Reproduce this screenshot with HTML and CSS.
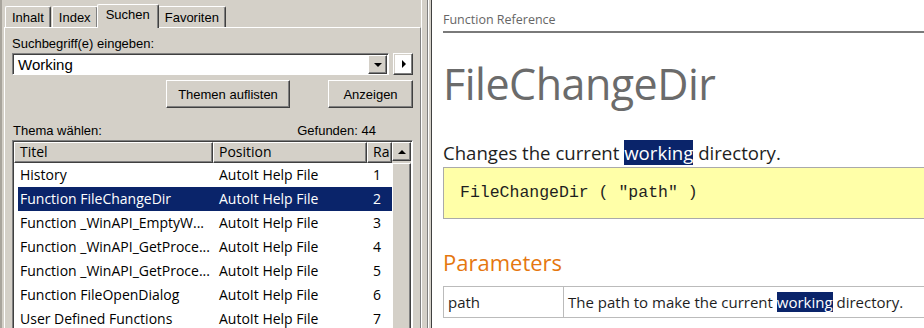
FILE: index.html
```html
<!DOCTYPE html>
<html lang="de">

<head>
    <meta charset="UTF-8">
    <meta name="viewport" content="width=device-width, initial-scale=1.0">
    <title>AutoIt Hilfe</title>
    <link rel="stylesheet" href="styles.css">
</head>

<body>
    <div class="window">
        <aside class="nav-pane">
            <div class="tabs">
                <div class="tab">Inhalt</div>
                <div class="tab">Index</div>
                <div class="tab active">Suchen</div>
                <div class="tab">Favoriten</div>
            </div>
            <div class="tab-panel">
                <label class="label">Suchbegriff(e) eingeben:</label>
                <div class="search-row">
                    <div class="combo">
                        <span class="combo-text">Working</span>
                        <span class="combo-btn"><span class="arrow-down"></span></span>
                    </div>
                    <div class="go-btn"><span class="arrow-right"></span></div>
                </div>
                <div class="button-row">
                    <div class="btn btn-list">Themen auflisten</div>
                    <div class="btn btn-show">Anzeigen</div>
                </div>
                <div class="result-info">
                    <span>Thema wählen:</span>
                    <span class="found">Gefunden: 44</span>
                </div>
                <div class="listview">
                    <div class="list-main">
                        <div class="list-head">
                            <div class="hcell c-title">Titel</div>
                            <div class="hcell c-pos">Position</div>
                            <div class="hcell c-rank">Ra</div>
                        </div>
                        <div id="rows"></div>
                    </div>
                    <div class="scrollbar">
                        <div class="sb-btn"><span class="arrow-up"></span></div>
                        <div class="sb-thumb"></div>
                    </div>
                </div>
            </div>
        </aside>
        <div class="splitter"></div>
        <main class="doc">
            <div class="doc-top">Function Reference</div>
            <h1 class="doc-title">FileChangeDir</h1>
            <p class="summary">Changes the current <span class="hit">working</span> directory.</p>
            <div class="syntax">FileChangeDir ( "path" )</div>
            <h2 class="section">Parameters</h2>
            <table class="params">
                <tr>
                    <td class="p-name">path</td>
                    <td>The path to make the current <span class="hit">working</span> directory.</td>
                </tr>
            </table>
        </main>
    </div>
    <script>
        const topics = [
            ["History", 1],
            ["Function FileChangeDir", 2],
            ["Function _WinAPI_EmptyW...", 3],
            ["Function _WinAPI_GetProce...", 4],
            ["Function _WinAPI_GetProce...", 5],
            ["Function FileOpenDialog", 6],
            ["User Defined Functions", 7]
        ];
        const selected = 1;

        const rowsEle = document.getElementById('rows');
        for (let i = 0; i < topics.length; i++) {
            const row = document.createElement('div');
            row.className = "row" + (i === selected ? " selected" : "");
            row.innerHTML = `<div class="cell c-title">${topics[i][0]}</div>` +
                `<div class="cell c-pos">AutoIt Help File</div>` +
                `<div class="cell c-rank">${topics[i][1]}</div>`;
            rowsEle.appendChild(row);
        }
    </script>
</body>

</html>
```

FILE: styles.css
```css
* {
    box-sizing: border-box;
}

body {
    margin: 0;
    width: 924px;
    height: 328px;
    overflow: hidden;
    font-family: "Liberation Sans", Arial, sans-serif;
    font-size: 13px;
    color: #000;
}

.window {
    display: flex;
    height: 328px;
}

/* left: help navigation */
.nav-pane {
    width: 421px;
    background-color: #d4d0c8;
    padding: 4px 0 0 2px;
    border-left: 2px solid #a8a49c;
    display: flex;
    flex-direction: column;
}

.tabs {
    display: flex;
    align-items: flex-end;
    height: 23px;
    padding-left: 1px;
}

.tab {
    height: 21px;
    padding: 3px 6px 0 6px;
    border-top: 1px solid #fff;
    border-left: 1px solid #fff;
    border-right: 1px solid #404040;
    box-shadow: inset -1px 0 0 #808080;
    border-radius: 2px 2px 0 0;
    margin-right: 1px;
    font-size: 13px;
}

.tab.active {
    height: 24px;
    padding-top: 2px;
    margin: 0 -1px 0 -2px;
    padding-left: 8px;
    padding-right: 8px;
    position: relative;
    top: 1px;
    background-color: #d4d0c8;
}

.tab-panel {
    flex: 1;
    border-top: 1px solid #fff;
    border-left: 1px solid #fff;
    border-right: 1px solid #808080;
    padding: 8px 7px 0 7px;
    display: flex;
    flex-direction: column;
}

.label {
    display: block;
    height: 16px;
    line-height: 15px;
}

.search-row {
    display: flex;
    margin-top: 1px;
    height: 22px;
}

.combo {
    width: 378px;
    background: #fff;
    border-top: 1px solid #808080;
    border-left: 1px solid #808080;
    border-right: 1px solid #fff;
    border-bottom: 1px solid #fff;
    box-shadow: inset 1px 1px 0 #404040;
    display: flex;
    align-items: center;
    justify-content: space-between;
    padding: 0 1px 0 5px;
}

.combo-text {
    font-size: 15px;
    padding-top: 1px;
}

.combo-btn {
    width: 19px;
    height: 19px;
    margin-top: 1px;
    background: #d4d0c8;
    border-top: 1px solid #fff;
    border-left: 1px solid #fff;
    border-right: 1px solid #404040;
    border-bottom: 1px solid #404040;
    box-shadow: inset -1px -1px 0 #808080;
    display: flex;
    align-items: center;
    justify-content: center;
}

.arrow-down {
    border-left: 4px solid transparent;
    border-right: 4px solid transparent;
    border-top: 4px solid #000;
    margin-top: 1px;
}

.go-btn {
    width: 20px;
    margin-left: 4px;
    background: #fff;
    border-top: 1px solid #fff;
    border-left: 1px solid #fff;
    border-right: 1px solid #404040;
    border-bottom: 1px solid #404040;
    box-shadow: inset -1px -1px 0 #808080, inset 1px 1px 0 #d4d0c8;
    display: flex;
    align-items: center;
    justify-content: center;
}

.arrow-right {
    border-top: 4px solid transparent;
    border-bottom: 4px solid transparent;
    border-left: 4px solid #000;
    margin-left: 1px;
}

.button-row {
    display: flex;
    justify-content: flex-end;
    margin-top: 5px;
    gap: 38px;
}

.btn {
    height: 28px;
    border-top: 1px solid #fff;
    border-left: 1px solid #fff;
    border-right: 1px solid #404040;
    border-bottom: 1px solid #404040;
    box-shadow: inset -1px -1px 0 #808080;
    display: flex;
    align-items: center;
    justify-content: center;
}

.btn-list {
    width: 124px;
}

.btn-show {
    width: 85px;
}

.result-info {
    display: flex;
    justify-content: space-between;
    margin-top: 15px;
    padding: 0 37px 0 1px;
    height: 17px;
    line-height: 15px;
}

.listview {
    display: flex;
    flex: 1;
    border-top: 1px solid #808080;
    border-left: 1px solid #808080;
    border-right: 1px solid #fff;
    box-shadow: inset 1px 1px 0 #404040;
    padding: 1px 0 0 1px;
    background: #fff;
}

.list-main {
    width: 378px;
    font-family: "Open Sans", "Noto Sans", sans-serif;
    font-size: 14px;
}

.list-head {
    display: flex;
    height: 21px;
    background: #d4d0c8;
}

.hcell {
    border-top: 1px solid #fff;
    border-left: 1px solid #fff;
    border-right: 1px solid #404040;
    border-bottom: 1px solid #404040;
    box-shadow: inset -1px -1px 0 #808080;
    padding: 0 5px;
    line-height: 18px;
    white-space: nowrap;
    overflow: hidden;
}

.c-title {
    width: 199px;
}

.c-pos {
    width: 154px;
}

.c-rank {
    width: 25px;
}

.row {
    display: flex;
    height: 24px;
    line-height: 24px;
    margin-left: 4px;
}

.row .cell {
    padding-left: 2px;
    white-space: nowrap;
    overflow: hidden;
}

.row .c-title {
    width: 195px;
}

.row .c-pos {
    width: 154px;
    padding-left: 6px;
}

.row .c-rank {
    width: 25px;
    padding-left: 6px;
}

.row.selected {
    background-color: #0a246a;
    color: #fff;
}

.scrollbar {
    width: 19px;
    background: #d4d0c8;
    display: flex;
    flex-direction: column;
}

.sb-btn,
.sb-thumb {
    border-top: 1px solid #fff;
    border-left: 1px solid #fff;
    border-right: 1px solid #404040;
    border-bottom: 1px solid #404040;
    box-shadow: inset -1px -1px 0 #808080;
}

.sb-btn {
    height: 19px;
    display: flex;
    align-items: center;
    justify-content: center;
}

.arrow-up {
    border-left: 4px solid transparent;
    border-right: 4px solid transparent;
    border-bottom: 4px solid #000;
}

.sb-thumb {
    flex: 1;
    margin-top: 2px;
}

.splitter {
    width: 11px;
    background: #d4d0c8;
    border-left: 1px solid #fff;
    border-right: 1px solid #404040;
    box-shadow: inset 5px 0 0 #d4d0c8, inset 6px 0 0 #808080, inset 7px 0 0 #fff;
}

/* right: topic page */
.doc {
    flex: 1;
    background: #fff;
    padding: 0 0 0 11px;
    font-family: "Open Sans", "Noto Sans", sans-serif;
    color: #1e1e1e;
    overflow: hidden;
}

.doc-top {
    margin-top: 11px;
    font-size: 12.5px;
    color: #666;
    padding-bottom: 4px;
    border-bottom: 2px solid #7a7a7a;
    height: 22px;
}

.doc-title {
    margin: 24px 0 0 0;
    font-size: 43px;
    font-weight: 400;
    color: #6b6b6b;
    line-height: 54px;
    letter-spacing: -0.5px;
}

.summary {
    margin: 29px 0 0 0;
    font-size: 18.6px;
    line-height: 26px;
}

.hit {
    background-color: #0a246a;
    color: #fff;
}

.syntax {
    margin-top: 1px;
    height: 52px;
    background: #ffffa8;
    border: 1px solid #aaa;
    border-right: none;
    font-family: "Liberation Mono", "Courier New", monospace;
    font-size: 16.5px;
    line-height: 50px;
    padding-left: 16px;
}

.section {
    margin: 29px 0 0 0;
    font-size: 22px;
    font-weight: 400;
    color: #e5770f;
    line-height: 28px;
}

.params {
    margin-top: 10px;
    width: 100%;
    border-collapse: collapse;
    font-size: 15px;
}

.params td {
    border: 1px solid #bbb;
    border-right: none;
    height: 31px;
    padding: 0 4px;
    white-space: nowrap;
}

.params .p-name {
    width: 120px;
    border-right: 1px solid #bbb;
}
```
